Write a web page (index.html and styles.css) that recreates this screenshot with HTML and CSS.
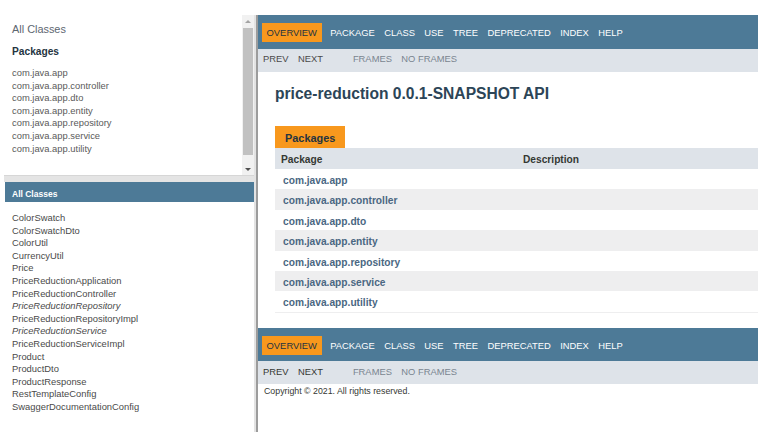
FILE: index.html
```html
<!DOCTYPE html>
<html>
<head>
<meta charset="utf-8">
<link rel="stylesheet" href="styles.css">
</head>
<body>
<div class="frameset">
  <div class="left">
    <div class="pkg-frame">
      <div class="pkg-content">
        <div class="index-header">All Classes</div>
        <h2 class="pkg-title">Packages</h2>
        <ul class="list">
          <li>com.java.app</li>
          <li>com.java.app.controller</li>
          <li>com.java.app.dto</li>
          <li>com.java.app.entity</li>
          <li>com.java.app.repository</li>
          <li>com.java.app.service</li>
          <li>com.java.app.utility</li>
        </ul>
      </div>
      <div class="scrollbar">
        <div class="arrow up"></div>
        <div class="thumb"></div>
        <div class="arrow down"></div>
      </div>
    </div>
    <div class="hdivider"></div>
    <div class="class-frame">
      <div class="bar">All Classes</div>
      <ul class="list classes">
        <li>ColorSwatch</li>
        <li>ColorSwatchDto</li>
        <li>ColorUtil</li>
        <li>CurrencyUtil</li>
        <li>Price</li>
        <li>PriceReductionApplication</li>
        <li>PriceReductionController</li>
        <li class="iface">PriceReductionRepository</li>
        <li>PriceReductionRepositoryImpl</li>
        <li class="iface">PriceReductionService</li>
        <li>PriceReductionServiceImpl</li>
        <li>Product</li>
        <li>ProductDto</li>
        <li>ProductResponse</li>
        <li>RestTemplateConfig</li>
        <li>SwaggerDocumentationConfig</li>
      </ul>
    </div>
  </div>
  <div class="vdivider"></div>
  <div class="main">
    <div class="topnav">
      <ul class="navlist">
        <li class="active">Overview</li>
        <li>Package</li>
        <li>Class</li>
        <li>Use</li>
        <li>Tree</li>
        <li>Deprecated</li>
        <li>Index</li>
        <li>Help</li>
      </ul>
    </div>
    <div class="subnav">
      <ul class="navlist first">
        <li>Prev</li>
        <li>Next</li>
      </ul>
      <ul class="navlist links">
        <li>Frames</li>
        <li>No&nbsp;Frames</li>
      </ul>
    </div>
    <h1 class="title">price-reduction 0.0.1-SNAPSHOT API</h1>
    <div class="content">
      <div class="tab">Packages</div>
      <div class="table">
        <div class="row head"><span class="c1">Package</span><span class="c2">Description</span></div>
        <div class="row"><span class="c1 link">com.java.app</span></div>
        <div class="row alt"><span class="c1 link">com.java.app.controller</span></div>
        <div class="row"><span class="c1 link">com.java.app.dto</span></div>
        <div class="row alt"><span class="c1 link">com.java.app.entity</span></div>
        <div class="row"><span class="c1 link">com.java.app.repository</span></div>
        <div class="row alt"><span class="c1 link">com.java.app.service</span></div>
        <div class="row"><span class="c1 link">com.java.app.utility</span></div>
      </div>
    </div>
    <div class="topnav bottom">
      <ul class="navlist">
        <li class="active">Overview</li>
        <li>Package</li>
        <li>Class</li>
        <li>Use</li>
        <li>Tree</li>
        <li>Deprecated</li>
        <li>Index</li>
        <li>Help</li>
      </ul>
    </div>
    <div class="subnav bottom-sub">
      <ul class="navlist first">
        <li>Prev</li>
        <li>Next</li>
      </ul>
      <ul class="navlist links">
        <li>Frames</li>
        <li>No&nbsp;Frames</li>
      </ul>
    </div>
    <p class="copy">Copyright © 2021. All rights reserved.</p>
  </div>
</div>
</body>
</html>
```

FILE: styles.css
```css
* { box-sizing: border-box; }
html, body { margin: 0; padding: 0; background: #fff; }
body {
  font-family: "Liberation Sans", Arial, sans-serif;
  color: #353833;
  overflow: hidden;
}
ul { list-style: none; margin: 0; padding: 0; }

.frameset {
  margin-top: 15px;
  height: 417px;
  display: grid;
  grid-template-columns: 254px 4px 500px;
}

/* left column */
.left {
  display: grid;
  grid-template-rows: 160px 7px 1fr;
  min-height: 0;
  overflow: hidden;
}
.pkg-frame { display: flex; min-height: 0; }
.pkg-content { flex: 1; padding: 7px 0 0 12px; }
.index-header {
  font-size: 10.9px;
  line-height: 14px;
  color: #5d6670;
}
.pkg-title {
  margin: 9px 0 0;
  font-size: 10.2px;
  line-height: 14px;
  font-weight: bold;
  color: #253441;
}
.list {
  margin-top: 8px;
  font-size: 9.4px;
  line-height: 12.6px;
  color: #5a5a5a;
  white-space: nowrap;
}
.scrollbar {
  width: 12px;
  background: #f1f1f1;
  display: flex;
  flex-direction: column;
  align-items: center;
}
.arrow { width: 0; height: 0; border-left: 3px solid transparent; border-right: 3px solid transparent; }
.arrow.up { border-bottom: 3px solid #a3a3a3; margin: 5px 0 5px; }
.arrow.down { border-top: 3px solid #505050; margin: 13px 0 0; }
.thumb { width: 10px; height: 127px; background: #c1c1c1; }

.hdivider { background: #e4e4e4; border-top: 1px solid #d6d6d6; margin-left: 4px; }

.class-frame { padding-left: 5px; min-height: 0; overflow: hidden; }
.bar {
  height: 20px;
  background: #4d7a97;
  color: #fff;
  font-weight: bold;
  font-size: 8.5px;
  line-height: 14px;
  padding: 5px 0 0 7px;
}
.classes { margin-top: 10px; padding-left: 7px; color: #4a4a4a; }
.classes .iface { font-style: italic; }

.vdivider {
  background: #e3e3e3;
  border-right: 2px solid #9c9c9c;
}

/* main frame */
.main { min-width: 0; }
.topnav {
  background: #4d7a97;
  height: 34px;
  padding-top: 8px;
}
.navlist { display: flex; }
.navlist li {
  text-transform: uppercase;
  font-size: 9.4px;
  line-height: 19px;
  padding: 0 4.7px;
  color: #fff;
  white-space: nowrap;
}
.navlist li.active {
  background: #f8981d;
  color: #253441;
  margin: 0 3.9px;
}
.subnav {
  background: #dee3e9;
  height: 23px;
  display: flex;
  padding-left: 0.3px;
  padding-top: 0;
}
.subnav .navlist li { color: #4a4a4a; }
.subnav .navlist.first { margin-right: 20.6px; }
.subnav .navlist.links li { color: #7a8590; }
.bottom-sub { padding-top: 1px; }
.bottom-sub .navlist.first li { color: #353833; }

.title {
  margin: 0;
  padding: 13px 0 0 17px;
  height: 54px;
  font-size: 15.6px;
  line-height: 18px;
  font-weight: bold;
  color: #2c4557;
}
.content { padding-left: 17px; }
.tab {
  display: inline-block;
  width: 70px;
  height: 22px;
  background: #f8981d;
  color: #253441;
  font-weight: bold;
  font-size: 10.9px;
  line-height: 14px;
  padding: 5px 0 0 10px;
  vertical-align: top;
}
.table { border-bottom: 1px solid #eeeeef; }
.row {
  display: flex;
  height: 20.4px;
  font-size: 10.2px;
  line-height: 14px;
  padding-top: 5px;
  background: #fff;
}
.row.alt { background: #eeeeef; }
.row.head { background: #dee3e9; height: 21px; padding-top: 5px; font-weight: bold; color: #353833; }
.row .c1 { width: 242px; padding-left: 8px; }
.row.head .c1 { padding-left: 6px; }
.row .c2 { padding-left: 6px; }
.link { font-weight: bold; color: #4a6782; }

.bottom { margin-top: 15px; height: 33px; }
.copy {
  margin: 0;
  padding: 1px 0 0 6px;
  font-size: 8.8px;
  line-height: 12px;
  color: #353833;
}
```
